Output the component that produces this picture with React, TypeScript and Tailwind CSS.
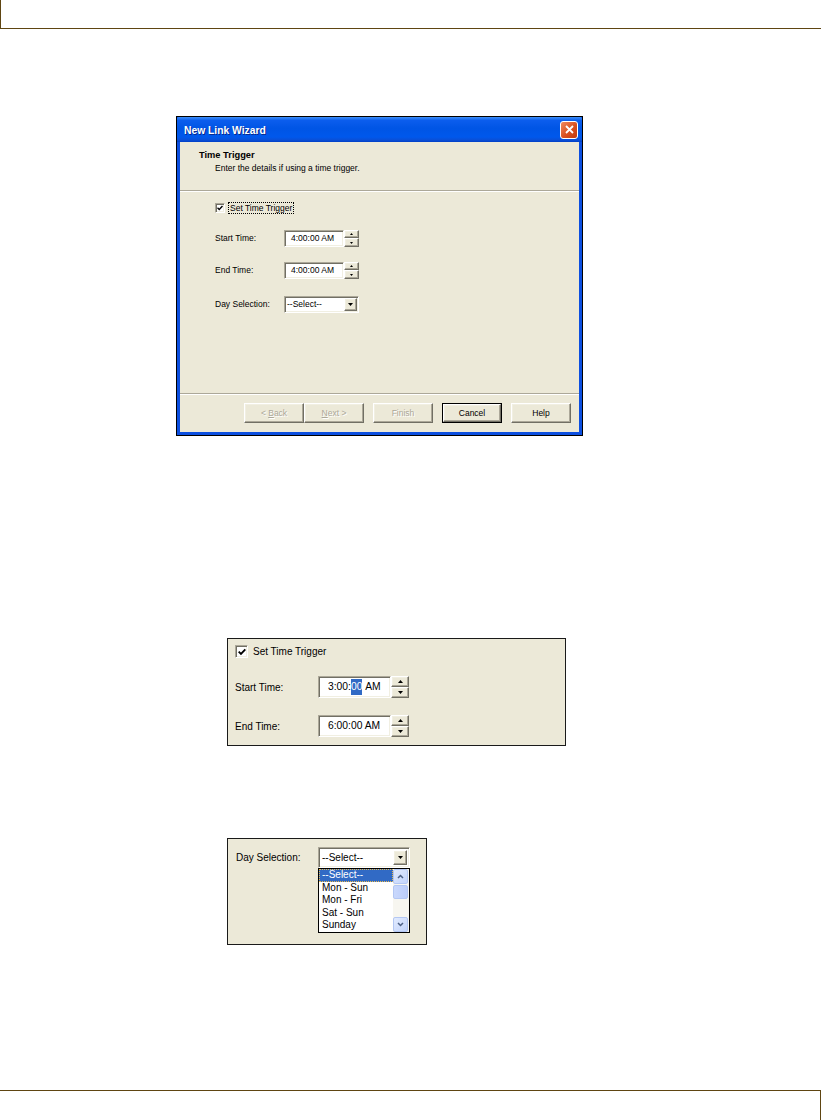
import React from "react";

const FONT = "font-['Liberation_Sans',Arial,sans-serif]";
const sunken =
  "border border-t-[#aca899] border-l-[#aca899] border-r-white border-b-white shadow-[inset_1px_1px_0_#716f64,inset_-1px_-1px_0_#f1efe2]";
const raised =
  "border border-t-white border-l-white border-r-[#716f64] border-b-[#716f64] shadow-[inset_-1px_-1px_0_#aca899,inset_1px_1px_0_#f1efe2] bg-[#ece9d8]";

function Arrow({ up, w = 3 }: { up: boolean; w?: number }) {
  const h = Math.ceil(w / 2);
  const pts = up ? `0,${h} ${w / 2},0 ${w},${h}` : `0,0 ${w / 2},${h} ${w},0`;
  return (
    <svg width={w} height={h} viewBox={`0 0 ${w} ${h}`} className="block">
      <polygon points={pts} fill="#000" />
    </svg>
  );
}

function Check({ s }: { s: number }) {
  return (
    <svg width={s} height={s} viewBox="0 0 7 7" className="block">
      <path d="M0.6 3.2 L2.6 5.2 L6.4 1.2" stroke="#000" strokeWidth="1.6" fill="none" />
    </svg>
  );
}

function Spinner({ w, h1, h2, aw }: { w: number; h1: string; h2: string; aw: number }) {
  return (
    <div className="flex flex-col" style={{ width: w }}>
      <div className={`${raised} ${h1} flex items-center justify-center`}>
        <Arrow up w={aw} />
      </div>
      <div className={`${raised} ${h2} flex items-center justify-center`}>
        <Arrow up={false} w={aw} />
      </div>
    </div>
  );
}

function WizButton({ label, disabled, def }: { label: React.ReactNode; disabled?: boolean; def?: boolean }) {
  return (
    <div className={`w-[60px] h-[20px] ${def ? "border border-black" : ""}`}>
      <div
        className={`${raised} w-full h-full flex items-center justify-center text-[8.5px] font-normal ${
          disabled ? "text-[#aca899] [text-shadow:1px_1px_0_#fff]" : "text-black"
        }`}
      >
        {label}
      </div>
    </div>
  );
}

function Dialog() {
  return (
    <div className="ml-[176px] mt-[87px] w-[407px] h-[320px] border border-black bg-[#0c4fe0] flex flex-col">
      {/* title bar */}
      <div className="h-[25px] flex items-center justify-between pl-[7px] pr-[4px] bg-[linear-gradient(to_bottom,#3d8ff8_0%,#0b5ded_14%,#0055e5_45%,#0058ec_80%,#0a4fd6_92%,#003fc7_100%)] rounded-t-[2px]">
        <span className="text-white font-bold text-[10.3px] pt-[2px] [text-shadow:1px_1px_0_#0a2a8c]">New Link Wizard</span>
        <div className="w-[18px] h-[18px] rounded-[3px] border border-white bg-[linear-gradient(to_bottom_right,#f08a60,#d9501f_55%,#c13a10)] flex items-center justify-center">
          <svg width="9" height="9" viewBox="0 0 9 9" className="block">
            <path d="M1 1 L8 8 M8 1 L1 8" stroke="#fff" strokeWidth="1.8" />
          </svg>
        </div>
      </div>
      {/* body */}
      <div className="flex-1 mx-[3px] mb-[3px] bg-[#ece9d8] flex flex-col text-[8.5px] text-black">
        <div className="h-[48px] pt-[8px]">
          <div className="pl-[19px] font-bold text-[9.3px] leading-[11px]">Time Trigger</div>
          <div className="pl-[35px] leading-[11px] mt-[2px]">Enter the details if using a time trigger.</div>
        </div>
        <div className="border-t border-t-[#aca899] border-b border-b-white" />
        <div className="flex-1 pl-[35px] pt-[11px]">
          <div className="flex items-center h-[10px]">
            <div className={`${sunken} w-[10px] h-[10px] bg-white flex items-center justify-center`}>
              <Check s={6} />
            </div>
            <span className="ml-[3px] px-[1px] border border-dotted border-black leading-[10px]">Set Time Trigger</span>
          </div>
          <div className="flex items-center mt-[17px]">
            <span className="w-[69px]">Start Time:</span>
            <div className={`${sunken} w-[60px] h-[17px] bg-white flex items-center pl-[6px]`}>4:00:00 AM</div>
            <Spinner w={15} h1="h-[8px]" h2="h-[9px]" aw={3} />
          </div>
          <div className="flex items-center mt-[15px]">
            <span className="w-[69px]">End Time:</span>
            <div className={`${sunken} w-[60px] h-[17px] bg-white flex items-center pl-[6px]`}>4:00:00 AM</div>
            <Spinner w={15} h1="h-[8px]" h2="h-[9px]" aw={3} />
          </div>
          <div className="flex items-center mt-[17px]">
            <span className="w-[69px]">Day Selection:</span>
            <div className={`${sunken} w-[75px] h-[17px] bg-white flex items-center justify-between pl-[2px] pr-[1px]`}>
              <span>--Select--</span>
              <div className={`${raised} w-[13px] h-[13px] flex items-center justify-center`}>
                <Arrow up={false} w={5} />
              </div>
            </div>
          </div>
        </div>
        <div className="border-t border-t-[#aca899] border-b border-b-white" />
        <div className="h-[37px] pt-[8px] pl-[64px] flex gap-[9px]">
          <div className="flex">
            <WizButton disabled label={<span>&lt; <u>B</u>ack</span>} />
            <WizButton disabled label={<span><u>N</u>ext &gt;</span>} />
          </div>
          <WizButton disabled label="Finish" />
          <WizButton def label="Cancel" />
          <WizButton label="Help" />
        </div>
      </div>
    </div>
  );
}

function TimePanel() {
  return (
    <div className="ml-[227px] mt-[202px] w-[339px] h-[108px] border border-[#1a1a1a] bg-[#ece9d8] pl-[7px] pt-[6px] text-[10px] text-black">
      <div className="flex items-center h-[13px]">
        <div className={`${sunken} w-[13px] h-[13px] bg-white flex items-center justify-center`}>
          <Check s={8} />
        </div>
        <span className="ml-[5px]">Set Time Trigger</span>
      </div>
      <div className="flex items-center mt-[18px]">
        <span className="w-[83px]">Start Time:</span>
        <div className={`${sunken} w-[73px] h-[22px] bg-white flex items-center pl-[9px] text-[10.3px]`}>
          <span>3:00:</span>
          <span className="bg-[#316ac5] text-white">00</span>
          <span>&nbsp;AM</span>
        </div>
        <Spinner w={18} h1="h-[11px]" h2="h-[11px]" aw={5} />
      </div>
      <div className="flex items-center mt-[17px]">
        <span className="w-[83px]">End Time:</span>
        <div className={`${sunken} w-[73px] h-[22px] bg-white flex items-center pl-[9px] text-[10.3px]`}>6:00:00 AM</div>
        <Spinner w={18} h1="h-[11px]" h2="h-[11px]" aw={5} />
      </div>
    </div>
  );
}

function ScrollBtn({ up }: { up: boolean }) {
  return (
    <div className="w-[15px] h-[15px] rounded-[2px] border border-[#b3c7f3] bg-[linear-gradient(to_bottom_right,#e2ebfe,#c1d3fb)] flex items-center justify-center">
      <svg width="7" height="5" viewBox="0 0 7 5" className="block">
        <path d={up ? "M1 4 L3.5 1.5 L6 4" : "M1 1 L3.5 3.5 L6 1"} stroke="#4d6185" strokeWidth="1.5" fill="none" />
      </svg>
    </div>
  );
}

function DayPanel() {
  const items = ["Mon - Sun", "Mon - Fri", "Sat - Sun", "Sunday"];
  return (
    <div className="ml-[227px] mt-[92px] w-[200px] h-[107px] border border-[#1a1a1a] bg-[#ece9d8] text-[10px] text-black flex pl-[8px] pt-[8px]">
      <div className="w-[82px] h-[21px] flex items-center">Day Selection:</div>
      <div className="flex flex-col w-[92px]">
        <div className={`${sunken} h-[21px] bg-white flex items-center justify-between pl-[3px] pr-[2px]`}>
          <span>--Select--</span>
          <div className={`${raised} w-[14px] h-[15px] flex items-center justify-center`}>
            <Arrow up={false} w={5} />
          </div>
        </div>
        <div className="h-[65px] border border-black bg-white flex">
          <div className="flex-1 flex flex-col">
            <div className="h-[12.5px] bg-[#316ac5] text-white border border-dotted border-[#e8b84d] flex items-center pl-[2px] leading-none">
              --Select--
            </div>
            {items.map((t) => (
              <div key={t} className="h-[12.5px] flex items-center pl-[3px] leading-none">
                {t}
              </div>
            ))}
          </div>
          <div className="w-[16px] bg-[#f7f6f0] flex flex-col justify-between">
            <div className="flex flex-col">
              <ScrollBtn up />
              <div className="w-[15px] h-[14px] mt-[1px] rounded-[2px] border border-[#b3c7f3] bg-[linear-gradient(to_right,#c9d8fc,#bbcdf9)]" />
            </div>
            <ScrollBtn up={false} />
          </div>
        </div>
      </div>
    </div>
  );
}

export default function App() {
  return (
    <div className={`${FONT} w-[821px] h-[1120px] bg-white flex flex-col overflow-hidden`}>
      <div className="h-[29px] border-l border-b border-[#5f4512] shrink-0" />
      <Dialog />
      <TimePanel />
      <DayPanel />
      <div className="mt-auto h-[30px] border-t border-r border-[#5f4512] shrink-0" />
    </div>
  );
}
